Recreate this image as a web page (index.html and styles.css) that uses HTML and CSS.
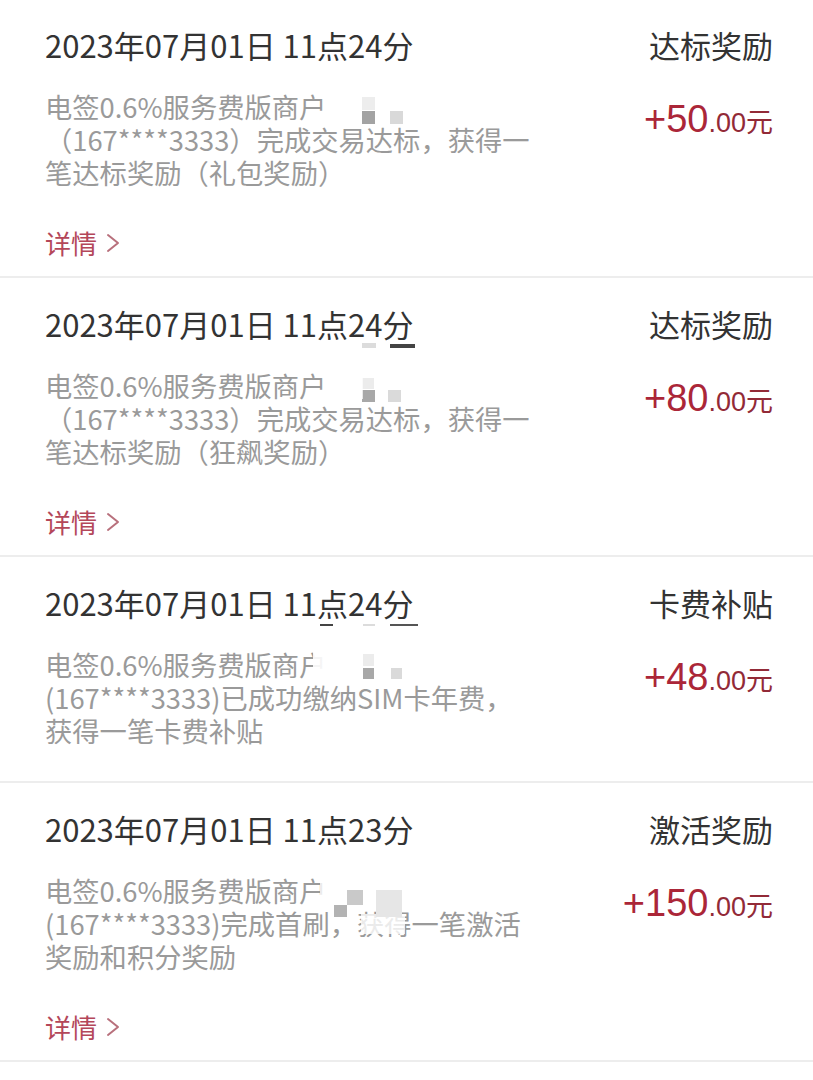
FILE: index.html
```html
<!DOCTYPE html>
<html lang="zh-CN">
  <head>
    <meta charset="UTF-8" />
    <meta name="viewport" content="width=device-width, initial-scale=1.0" />
    <title>奖励明细</title>
    <link rel="stylesheet" href="styles.css">
  </head>
  <body>
    <div class="list">
      <div class="record">
        <div class="record-head">
          <span class="record-time">2023年07月01日 11点24分</span>
          <span class="record-type">达标奖励</span>
        </div>
        <div class="record-body">
          <p class="record-desc">
            电签0.6%服务费版商户<br />（167****3333）完成交易达标，获得一<br />笔达标奖励（礼包奖励）
            <span class="mask mask-a"></span>
          </p>
          <div class="record-amount">+50<small>.00元</small></div>
        </div>
        <a class="record-more" href="#">详情
          <svg width="16" height="22" viewBox="0 0 16 22"><polyline points="3,3 13,11 3,19" /></svg>
        </a>
      </div>

      <div class="record">
        <div class="record-head">
          <span class="record-time">2023年07月01日 11点24分</span>
          <span class="record-type">达标奖励</span>
          <span class="smudge smudge-b"></span>
        </div>
        <div class="record-body">
          <p class="record-desc">
            电签0.6%服务费版商户<br />（167****3333）完成交易达标，获得一<br />笔达标奖励（狂飙奖励）
            <span class="mask mask-b"></span>
          </p>
          <div class="record-amount">+80<small>.00元</small></div>
        </div>
        <a class="record-more" href="#">详情
          <svg width="16" height="22" viewBox="0 0 16 22"><polyline points="3,3 13,11 3,19" /></svg>
        </a>
      </div>

      <div class="record">
        <div class="record-head">
          <span class="record-time">2023年07月01日 11点24分</span>
          <span class="record-type">卡费补贴</span>
          <span class="smudge smudge-c"></span>
        </div>
        <div class="record-body">
          <p class="record-desc">
            电签0.6%服务费版商户<br />(167****3333)已成功缴纳SIM卡年费，<br />获得一笔卡费补贴
            <span class="mask mask-c"></span>
          </p>
          <div class="record-amount">+48<small>.00元</small></div>
        </div>
      </div>

      <div class="record">
        <div class="record-head">
          <span class="record-time">2023年07月01日 11点23分</span>
          <span class="record-type">激活奖励</span>
        </div>
        <div class="record-body">
          <p class="record-desc">
            电签0.6%服务费版商户<br />(167****3333)完成首刷，获得一笔激活<br />奖励和积分奖励
            <span class="mask mask-d"></span>
          </p>
          <div class="record-amount">+150<small>.00元</small></div>
        </div>
        <a class="record-more" href="#">详情
          <svg width="16" height="22" viewBox="0 0 16 22"><polyline points="3,3 13,11 3,19" /></svg>
        </a>
      </div>
    </div>
  </body>
</html>
```

FILE: styles.css
```css
body {
  margin: 0;
  padding: 0;
  background-color: #fff;
  font-family: "Noto Sans CJK SC", "Noto Sans", sans-serif;
}

.list {
  width: 813px;
}

.record {
  padding: 26px 40px 13px 45px;
  border-bottom: 2px solid #ededed;
}

.record:first-child {
  padding-top: 25px;
}

.record-head {
  position: relative;
  display: flex;
  justify-content: space-between;
  align-items: center;
  font-size: 31px;
  line-height: 40px;
  color: #333;
}

.record-body {
  display: flex;
  justify-content: space-between;
  align-items: flex-start;
  margin-top: 25px;
  margin-bottom: 21px;
}

.record-desc {
  position: relative;
  margin: 0;
  font-size: 27.3px;
  line-height: 33px;
  color: #9a9a9a;
}

.record-amount {
  margin-top: 9px;
  font-family: "Liberation Sans", "Noto Sans CJK SC", sans-serif;
  font-size: 38px;
  line-height: 40px;
  color: #ab2638;
}

.record-amount small {
  font-size: 27px;
  color: #922a37;
}

/* margin collapses with the body's 21px, so this is the real gap */
.record-more {
  display: flex;
  align-items: center;
  gap: 8px;
  margin-top: 34px;
  font-size: 26px;
  line-height: 40px;
  color: #b4475a;
  text-decoration: none;
}

.record-more svg {
  fill: none;
  stroke: #b8707c;
  stroke-width: 2;
  stroke-linecap: round;
  stroke-linejoin: round;
}

/* pixelated privacy blur from the original screenshot */
.mask {
  position: absolute;
  top: 0;
  left: 250px;
  width: 110px;
  height: 66px;
  background-repeat: no-repeat;
}

.mask-a {
  background-image: linear-gradient(#ededed, #ededed), linear-gradient(#a3a3a3, #a3a3a3), linear-gradient(#d9d9d9, #d9d9d9);
  background-position: 67px 7px, 67px 21px, 95px 21px;
  background-size: 13px 13px, 13px 13px, 13px 13px;
}

.mask-b {
  background-image: linear-gradient(rgba(255, 255, 255, 0.75), rgba(255, 255, 255, 0.75)), linear-gradient(#ececec, #ececec), linear-gradient(#a8a8a8, #a8a8a8), linear-gradient(#dadada, #dadada);
  background-position: 30px 4px, 67px 9px, 67px 21px, 93px 21px;
  background-size: 38px 26px, 12px 11px, 13px 12px, 13px 12px;
}

.mask-c {
  background-image: linear-gradient(rgba(255, 255, 255, 0.9), rgba(255, 255, 255, 0.9)), linear-gradient(#ececec, #ececec), linear-gradient(#a8a8a8, #a8a8a8), linear-gradient(#dadada, #dadada);
  background-position: 18px 2px, 68px 6px, 68px 20px, 96px 20px;
  background-size: 40px 30px, 11px 12px, 11px 11px, 11px 11px;
}

.mask-d {
  background-image: linear-gradient(#c9c9c9, #c9c9c9), linear-gradient(#b3b3b3, #b3b3b3), linear-gradient(#e6e6e6, #e6e6e6), linear-gradient(rgba(255, 255, 255, 0.8), rgba(255, 255, 255, 0.8)), linear-gradient(rgba(255, 255, 255, 0.8), rgba(255, 255, 255, 0.8));
  background-position: 52px 16px, 39px 31px, 81px 16px, 25px 4px, 66px 40px;
  background-size: 16px 15px, 13px 12px, 26px 27px, 30px 26px, 52px 20px;
}

.smudge {
  position: absolute;
  top: 36px;
  left: 270px;
  width: 150px;
  height: 10px;
  background-repeat: no-repeat;
}

.smudge-b {
  background-image: linear-gradient(#dcdcdc, #dcdcdc), linear-gradient(#444, #444);
  background-position: 47px 3px, 75px 4px;
  background-size: 14px 5px, 25px 4px;
}

.smudge-c {
  background-image: linear-gradient(#444, #444), linear-gradient(#dcdcdc, #dcdcdc), linear-gradient(#555, #555);
  background-position: 5px 5px, 48px 5px, 75px 5px;
  background-size: 13px 2px, 12px 2px, 28px 2px;
}
```
